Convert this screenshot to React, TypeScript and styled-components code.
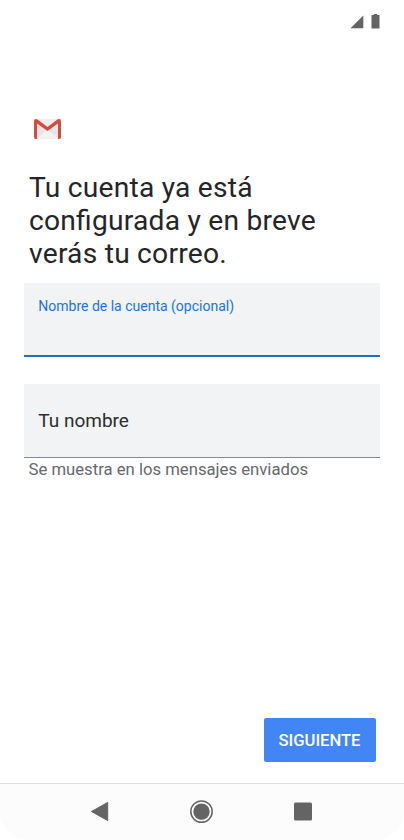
import React from 'react';
import styled, { createGlobalStyle } from 'styled-components';

const GlobalStyle = createGlobalStyle`
  *, *::before, *::after { box-sizing: border-box; }
  html, body { margin: 0; background: #fff; }
  body { font-family: Roboto, "Liberation Sans", sans-serif; overflow: hidden; }
`;

const Screen = styled.div`
  display: flex;
  flex-direction: column;
  width: 404px;
  height: 840px;
  background: #fff;
  overflow: hidden;
`;

const StatusBar = styled.header`
  display: flex;
  justify-content: flex-end;
  gap: 7px;
  height: 40px;
  padding: 14px 24.5px 0 0;
`;

const Content = styled.main`
  display: flex;
  flex: 1;
  flex-direction: column;
  padding: 79px 24px 0;
`;

const Logo = styled.svg`
  display: block;
  margin-left: 10px;
`;

const Title = styled.h1`
  margin: 32px 0 0 5px;
  color: #242528;
  font-size: 28.2px;
  font-weight: 400;
  line-height: 33px;
  letter-spacing: 0.23px;
  font-feature-settings: "liga" 1;
  white-space: nowrap;
`;

const Field = styled.label<{ $active?: boolean }>`
  display: flex;
  flex-direction: column;
  width: 356px;
  height: 74px;
  margin-top: ${(p) => (p.$active ? 13 : 27)}px;
  padding: ${(p) => (p.$active ? 14 : 26)}px 14px 0 14.3px;
  background: #f1f3f4;
  border-bottom: ${(p) => (p.$active ? '2px solid #1f6fcb' : '1px solid #85888c')};
`;

const FieldLabel = styled.span<{ $active?: boolean }>`
  color: ${(p) => (p.$active ? '#1a73e8' : '#2c2e31')};
  font-size: ${(p) => (p.$active ? 14 : 19)}px;
  line-height: ${(p) => (p.$active ? 18 : 22)}px;
  white-space: nowrap;
`;

const Helper = styled.p`
  margin: 2px 0 0 4.5px;
  color: #66696d;
  font-size: 16.7px;
  line-height: 20px;
  white-space: nowrap;
`;

const Actions = styled.div`
  display: flex;
  justify-content: flex-end;
  margin-top: auto;
  padding: 0 4.5px 21px 0;
`;

const NextButton = styled.button`
  width: 112px;
  height: 44px;
  padding: 0;
  border: 0;
  border-radius: 2px;
  background: #4285f4;
  color: #fff;
  font: 500 16.6px/45px Roboto, "Liberation Sans", sans-serif;
  white-space: nowrap;
`;

const NavBar = styled.nav`
  display: grid;
  grid-template-columns: repeat(3, 101.5px);
  justify-content: center;
  justify-items: center;
  align-items: center;
  height: 57px;
  border-top: 1px solid #dedede;
  border-radius: 0 0 28px 28px;
  background: #fcfcfc;
`;

const NavIcon = styled.svg`
  display: block;
`;

export default function App() {
  return (
    <>
      <GlobalStyle />
      <Screen>
        <StatusBar>
          <svg width="14" height="15" viewBox="0 0 14 15">
            <path d="M13.3 1.5v12.7H.5z" fill="#646464" />
          </svg>
          <svg width="9" height="15" viewBox="0 0 9 15">
            <path d="M2.8 0h3.4v1H8q.5 0 .5.5v12.6q0 .5-.5.5H1q-.5 0-.5-.5V1.5Q.5 1 1 1h1.8z" fill="#646464" />
          </svg>
        </StatusBar>
        <Content>
          <Logo width="28" height="20" viewBox="0 0 28 20">
            <path d="M1.5 0h24Q27 0 27 2v16q0 2-1.5 2h-24Q0 20 0 18V2Q0 0 1.5 0z" fill="#e6e6e6" />
            <path d="M3 19.8 13.5 10.5 24 19.8z" fill="#f3f3f3" />
            <path d="M3.5 0h20l-10 7.4z" fill="#f0efef" />
            <path d="M0 2.2Q0 0 2 0q.8 0 1.5.6l10 7.4 10-7.4Q24.2 0 25 0q2 0 2 2.2V18q0 2-2 2h-1V4.5L13.5 12 3 4.5V20H2q-2 0-2-2z" fill="#d54b40" />
          </Logo>
          <Title>
            Tu cuenta ya está<br />configurada y en breve<br />verás tu correo.
          </Title>
          <Field $active>
            <FieldLabel $active>Nombre de la cuenta (opcional)</FieldLabel>
          </Field>
          <Field>
            <FieldLabel>Tu nombre</FieldLabel>
          </Field>
          <Helper>Se muestra en los mensajes enviados</Helper>
          <Actions>
            <NextButton>SIGUIENTE</NextButton>
          </Actions>
        </Content>
        <NavBar>
          <NavIcon width="24" height="24" viewBox="0 0 24 24">
            <path d="M2.5 11.5 18.7 2.4V20.6z" fill="#646464" stroke="#646464" strokeLinejoin="round" />
          </NavIcon>
          <NavIcon width="24" height="24" viewBox="0 0 24 24">
            <circle cx="11.5" cy="11.6" r="10.7" fill="none" stroke="#646464" strokeWidth="1.5" />
            <circle cx="11.5" cy="11.6" r="8.2" fill="#646464" />
          </NavIcon>
          <NavIcon width="24" height="24" viewBox="0 0 24 24">
            <rect x="2" y="2.6" width="18" height="18" rx="1.5" fill="#646464" />
          </NavIcon>
        </NavBar>
      </Screen>
    </>
  );
}
